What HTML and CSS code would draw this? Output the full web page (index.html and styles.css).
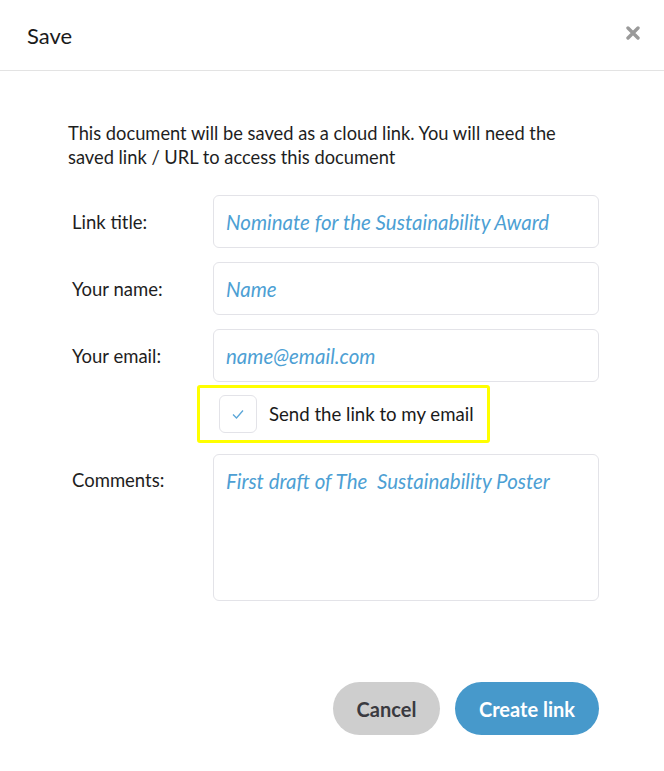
FILE: index.html
```html
<!DOCTYPE html>
<html>
<head>
<meta charset="utf-8">
<link rel="stylesheet" href="styles.css">
</head>
<body>
<div class="dialog">
  <header class="dlg-head">
    <h1 class="dlg-title">Save</h1>
    <button class="close" aria-label="Close">
      <svg width="14" height="14" viewBox="0 0 14 14"><path d="M2 2 L12 12 M12 2 L2 12" stroke="#9a9a9a" stroke-width="3.4" stroke-linecap="round"/></svg>
    </button>
  </header>
  <div class="dlg-body">
    <p class="intro">This document will be saved as a cloud link. You will need the saved link / URL to access this document</p>
    <div class="form">
      <label class="lbl">Link title:</label>
      <div class="field">Nominate for the Sustainability Award</div>
      <label class="lbl">Your name:</label>
      <div class="field">Name</div>
      <label class="lbl">Your email:</label>
      <div class="field">name@email.com</div>
      <div class="check-wrap">
        <div class="check-row">
          <span class="box"><svg width="14" height="12" viewBox="0 0 14 12"><path d="M2 6.5 L5.5 10 L12 2.5" fill="none" stroke="#5aa6d8" stroke-width="1.3"/></svg></span>
          <span class="check-text">Send the link to my email</span>
        </div>
      </div>
      <label class="lbl lbl-top">Comments:</label>
      <div class="field area">First draft of The&nbsp; Sustainability Poster</div>
    </div>
    <div class="actions">
      <button class="btn cancel">Cancel</button>
      <button class="btn primary">Create link</button>
    </div>
  </div>
</div>
</body>
</html>
```
FILE: styles.css
```css
* { box-sizing: border-box; }
body {
  margin: 0;
  background: #fff;
  font-family: Lato, "Open Sans", sans-serif;
  color: #1e1e1e;
}
.dialog { width: 664px; }
.dlg-head {
  height: 71px;
  border-bottom: 1px solid #e3e3e3;
  display: flex;
  align-items: center;
  justify-content: space-between;
  padding: 0 24px 0 27px;
}
.dlg-title {
  margin: 0;
  font-size: 22px;
  font-weight: 400;
  color: #1a1a1a;
}
.close {
  border: 0;
  background: none;
  padding: 0;
  display: flex;
  margin-top: -4px;
}
.dlg-body { padding: 50px 65px 0 68px; }
.intro {
  margin: 0;
  max-width: 505px;
  font-size: 18.3px;
  line-height: 24px;
  color: #1e1e1e;
}
.form {
  margin-top: 26px;
  display: grid;
  grid-template-columns: 145px 386px;
  row-gap: 14px;
  align-items: center;
}
.lbl {
  font-size: 18.5px;
  padding-left: 4px;
  color: #1e1e1e;
}
.lbl-top { align-self: start; padding-top: 15px; }
.field {
  height: 53px;
  border: 1px solid #e3e3e8;
  border-radius: 6px;
  padding: 0 12px;
  display: flex;
  align-items: center;
  font-size: 20.5px;
  font-style: italic;
  color: #4d9fd4;
}
.field.area {
  height: 147px;
  align-items: flex-start;
  padding-top: 14px;
}
.check-wrap {
  grid-column: 1 / 3;
  margin: -11px 0 -3px 129px;
}
.check-row {
  display: inline-flex;
  align-items: center;
  gap: 12px;
  height: 58px;
  border: 3px solid #ffff00;
  border-radius: 3px;
  padding: 0 13px 0 19px;
}
.box {
  width: 38px;
  height: 38px;
  border: 1px solid #e3e3e8;
  border-radius: 6px;
  display: flex;
  align-items: center;
  justify-content: center;
}
.check-text { font-size: 18.6px; color: #1a1a1a; }
.actions {
  display: flex;
  justify-content: flex-end;
  gap: 15px;
  margin-top: 81px;
}
.btn {
  height: 53px;
  border: 0;
  border-radius: 27px;
  font-family: inherit;
  font-size: 20px;
  font-weight: 700;
}
.cancel { width: 107px; background: #cecece; color: #3a3a40; }
.primary { width: 144px; background: #4799cb; color: #fff; }
```
